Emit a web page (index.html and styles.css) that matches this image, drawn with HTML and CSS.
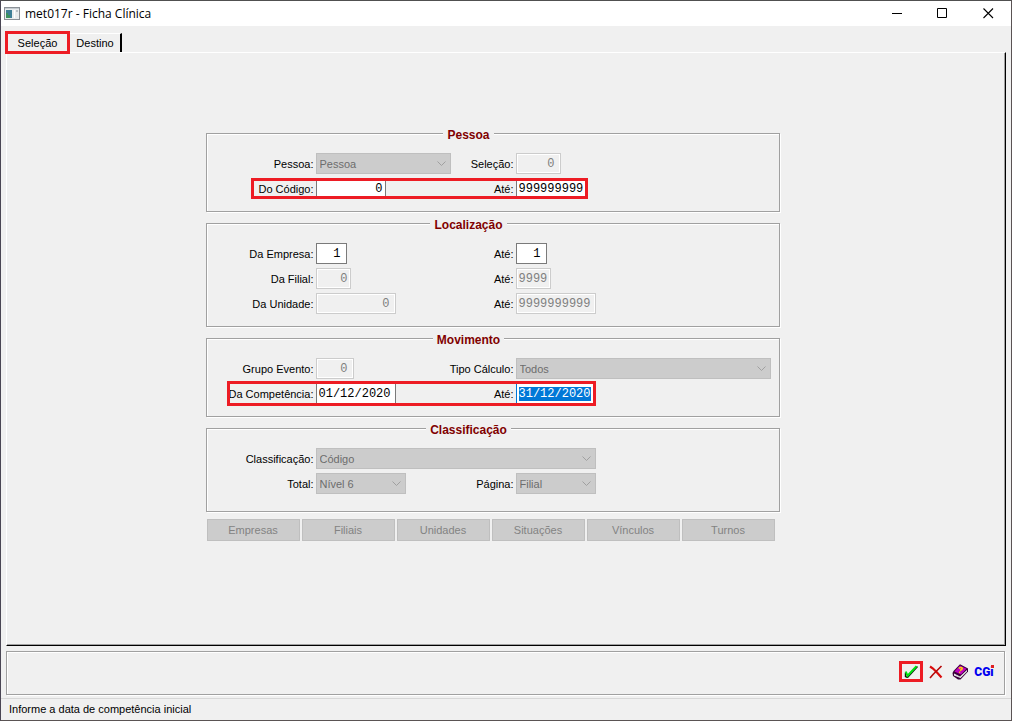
FILE: index.html
```html
<!DOCTYPE html>
<html lang="pt-BR">
<head>
<meta charset="utf-8">
<title>met017r - Ficha Clínica</title>
<link rel="stylesheet" href="styles.css">
</head>
<body>
<div class="window">
  <header class="titlebar">
    <svg class="app-icon" width="16" height="13" viewBox="0 0 16 13" shape-rendering="crispEdges">
      <rect width="16" height="13" fill="#8a9096"/><rect x="1" y="2" width="14" height="10" fill="#e9ecee"/>
      <rect x="1" y="1" width="14" height="1" fill="#c4cacf"/>
      <rect x="2" y="3" width="6" height="8" fill="#3e7f96"/><path d="M2 6h2v2h2v3H2z" fill="#3b9160"/>
      <rect x="10" y="3" width="1" height="8" fill="#fff"/><rect x="12" y="3" width="2" height="2" fill="#b9c1c7"/>
    </svg>
    <h1>met017r - Ficha Clínica</h1>
    <div class="window-controls">
      <button aria-label="Minimizar"><svg width="11" height="11" viewBox="0 0 11 11"><path d="M1 5.500h10" stroke="#000"/></svg></button>
      <button aria-label="Maximizar"><svg width="11" height="11" viewBox="0 0 11 11"><path d="M.5.500h9v9h-9z" fill="none" stroke="#000"/></svg></button>
      <button aria-label="Fechar"><svg width="11" height="11" viewBox="0 0 11 11"><path d="M.5.500l9.500 9.500M10 .5L.5 10" stroke="#000" stroke-width="1.100"/></svg></button>
    </div>
  </header>

  <main>
    <div class="tabs" role="tablist">
      <button class="tab active" role="tab" aria-selected="true">Seleção</button>
      <button class="tab" role="tab" aria-selected="false">Destino</button>
    </div>
    <div class="panel" role="tabpanel">
      <form>
        <fieldset>
          <legend>Pessoa</legend>
          <div class="row">
            <label for="pessoa">Pessoa:</label>
            <select id="pessoa" class="w-135" disabled><option>Pessoa</option></select>
            <label for="selecao">Seleção:</label>
            <input id="selecao" class="w-45 number inset" value="0" disabled>
          </div>
          <div class="row marked mark-code">
            <label for="codigo">Do Código:</label>
            <input id="codigo" class="w-70 number" value="0">
            <label for="codigo-ate">Até:</label>
            <input id="codigo-ate" class="w-70" value="999999999">
          </div>
        </fieldset>

        <fieldset>
          <legend>Localização</legend>
          <div class="row">
            <label for="empresa">Da Empresa:</label>
            <input id="empresa" class="w-31 number inset" value="1">
            <label for="empresa-ate">Até:</label>
            <input id="empresa-ate" class="w-31 number inset" value="1">
          </div>
          <div class="row">
            <label for="filial">Da Filial:</label>
            <input id="filial" class="w-35 number" value="0" disabled>
            <label for="filial-ate">Até:</label>
            <input id="filial-ate" class="w-35" value="9999" disabled>
          </div>
          <div class="row">
            <label for="unidade">Da Unidade:</label>
            <input id="unidade" class="w-80 number inset" value="0" disabled>
            <label for="unidade-ate">Até:</label>
            <input id="unidade-ate" class="w-80" value="9999999999" disabled>
          </div>
        </fieldset>

        <fieldset>
          <legend>Movimento</legend>
          <div class="row">
            <label for="grupo">Grupo Evento:</label>
            <input id="grupo" class="w-38 number inset" value="0" disabled>
            <label for="tipo">Tipo Cálculo:</label>
            <select id="tipo" class="w-255" disabled><option>Todos</option></select>
          </div>
          <div class="row marked mark-period">
            <label for="competencia">Da Competência:</label>
            <input id="competencia" class="w-80" value="01/12/2020">
            <label for="competencia-ate">Até:</label>
            <input id="competencia-ate" class="w-80" value="31/12/2020">
          </div>
        </fieldset>

        <fieldset class="last">
          <legend>Classificação</legend>
          <div class="row">
            <label for="classificacao">Classificação:</label>
            <select id="classificacao" class="w-280" disabled><option>Código</option></select>
          </div>
          <div class="row">
            <label for="total">Total:</label>
            <select id="total" class="w-90" disabled><option>Nível 6</option></select>
            <label for="pagina">Página:</label>
            <select id="pagina" class="w-80" disabled><option>Filial</option></select>
          </div>
        </fieldset>

        <div class="filters">
          <button type="button" disabled>Empresas</button>
          <button type="button" disabled>Filiais</button>
          <button type="button" disabled>Unidades</button>
          <button type="button" disabled>Situações</button>
          <button type="button" disabled>Vínculos</button>
          <button type="button" disabled>Turnos</button>
        </div>
      </form>
    </div>

    <div class="toolbar">
      <button class="confirm" aria-label="Confirmar">
        <svg width="14" height="13" viewBox="0 0 14 13"><path d="M1.500 7.500v4l2 1L13.500 1.500" fill="none" stroke="#111" stroke-width="1.400"/><path d="M1.800 6.500L3.500 10.800 12.500 1.200" fill="none" stroke="#00e010" stroke-width="2"/></svg>
      </button>
      <button aria-label="Cancelar">
        <svg width="14" height="14" viewBox="0 0 14 14"><path d="M1 1.500l3 2 4 4 4.500 5" fill="none" stroke="#d90c0c" stroke-width="2.200"/><path d="M12.500 1L8 5.500l-4 4-3 3.500" fill="none" stroke="#b50808" stroke-width="1.600"/></svg>
      </button>
      <button aria-label="Ajuda">
        <svg width="17" height="16" viewBox="0 0 17 16"><path d="M.5 9L1.500 7 8 .3l8 4.200v3L8.500 15.500H6L1 12z" fill="#3a003a"/><path d="M2.500 7.500L8 1.500l6.500 3.300L9 10.500z" fill="#c000c0"/><path d="M2 9.500L8 12.500l7-6.500v1.500L8.500 14 2 11.500z" fill="#fff"/><path d="M2.500 10.500l5.500 2.700 6.500-6" fill="none" stroke="#a8a8a8" stroke-width=".5"/><path d="M6.800 4.500q2.200-1.800 3.500-.2-.2 1.600-2.300 2M7.200 8l1 .5" fill="none" stroke="#ffd800" stroke-width="1.500"/></svg>
      </button>
      <button class="brand">CGi</button>
    </div>
  </main>
  <footer>Informe a data de competência inicial</footer>
</div>
<script src="script.js"></script>
</body>
</html>
```
FILE: styles.css
```css
*, *::before, *::after { box-sizing: border-box; }

body {
  margin: 0;
  font: 11px/16px "Liberation Sans", Arial, sans-serif;
  color: #000;
  background: #f0f0f0;
}

button, select { font: inherit; }
button { padding: 0; border: 0; background: none; color: inherit; }

.window {
  display: flex;
  flex-direction: column;
  min-height: 100vh;
  border: 1px solid #5a5354;
  border-top-color: #505050;
  border-left-color: #4a4654;
}

.titlebar {
  display: flex;
  align-items: center;
  height: 25px;
  padding-left: 3px;
  background: #fff;
}
.titlebar h1 {
  flex: 1;
  margin: 0 0 0 5px;
  font: 12px/16px "Open Sans", "Noto Sans", sans-serif;
}
.window-controls { display: flex; }
.window-controls button {
  display: grid;
  place-items: center;
  width: 46px;
  height: 25px;
}

main {
  flex: 1;
  display: flex;
  flex-direction: column;
  padding: 5px 5px 3px;
}

.tabs { display: flex; align-items: flex-end; height: 21px; }
.tab {
  width: 52px;
  height: 19px;
  border-top: 1px solid #fff;
  border-right: 2px solid #000;
}
.tab.active {
  position: relative;
  z-index: 1;
  width: 65px;
  height: 23px;
  margin: 0 0 -2px -1px;
  border: 3px solid #ed1c24;
  background: #f0f0f0;
}

.panel {
  flex: 1;
  padding: 70px 27px 20px 0;
  border-top: 1px solid #fff;
  border-left: 1px solid #fff;
  border-right: 1px solid #000;
  border-bottom: 1px solid #000;
  box-shadow: inset -1px -1px 0 #a0a0a0;
}

form { width: 574px; margin: 0 auto; }

fieldset {
  display: block;
  min-width: 0;
  margin: 0 0 1px;
  padding: 10px 48px 12px 0;
  border: 1px solid #a0a0a0;
  box-shadow: 1px 1px 0 #fff, inset 1px 1px 0 #fff;
}
fieldset.last { margin-bottom: 7px; padding-bottom: 17px; }
legend {
  margin: 0 auto;
  padding: 4px 4px 0;
  font-size: 12px;
  font-weight: 700;
  color: #800000;
  background: #f0f0f0;
}

.row {
  display: grid;
  grid-template-columns: 107px 134px 62px 1fr;
  column-gap: 2px;
  align-items: center;
}
.row + .row { margin-top: 4px; }
.row label { justify-self: end; white-space: nowrap; }

.marked { position: relative; }
.marked::after {
  content: "";
  position: absolute;
  border: 3px solid #ed1c24;
  pointer-events: none;
}
.mark-code::after { top: 0; bottom: 0; left: 44px; width: 337px; }
.mark-period::after { top: -2px; bottom: -2px; left: 20px; width: 369px; }

input {
  height: 21px;
  padding: 0 2px;
  border: 1px solid #7a7a7a;
  border-radius: 0;
  outline: 0;
  background: #fff;
  color: #000;
  font: 12px/14px "Liberation Mono", monospace;
}
input:focus { border-color: #0078d7; caret-color: transparent; }
input::selection { background: #0078d7; color: #fff; }
input:disabled {
  border-color: #ccc;
  background: #f0f0f0;
  box-shadow: inset 0 0 0 1px #fff;
  color: #808080;
}
.number { padding-right: 2px; text-align: right; }
.number.inset { padding-right: 5px; }

select {
  height: 21px;
  padding: 0 20px 0 3px;
  border: 1px solid #bfbfbf;
  border-radius: 0;
  appearance: none;
  background: #ccc url("data:image/svg+xml,%3Csvg xmlns='http://www.w3.org/2000/svg' width='9' height='6'%3E%3Cpath d='M.5.5l4 4 4-4' fill='none' stroke='%23a0a0a0'/%3E%3C/svg%3E") no-repeat right 4px center;
  color: #6d6d6d;
}
select:disabled { opacity: 1; }

.w-31 { width: 31px; }
.w-35 { width: 35px; }
.w-38 { width: 38px; }
.w-45 { width: 45px; }
.w-70 { width: 70px; }
.w-80 { width: 80px; }
.w-90 { width: 90px; }
.w-135 { width: 135px; }
.w-255 { width: 255px; }
.w-280 { width: 280px; }

.filters {
  display: grid;
  grid-template-columns: repeat(6, 1fr);
  gap: 2px;
  padding: 0 5px 0 1px;
}
.filters button {
  height: 22px;
  border: 1px solid #bfbfbf;
  background: #ccc;
  color: #838383;
}

.toolbar {
  display: flex;
  align-items: center;
  justify-content: flex-end;
  height: 44px;
  margin: 5px 1px 0 0;
  padding: 0 8px 3px 0;
  border: 1px solid #a0a0a0;
  box-shadow: 1px 1px 0 #fff, inset 1px 1px 0 #fff;
}
.toolbar button {
  display: grid;
  place-items: center;
  width: 24px;
  height: 21px;
}
.toolbar .confirm { margin-right: 1px; border: 3px solid #ed1c24; }
.toolbar .brand {
  position: relative;
  font: 900 12px/16px Roboto, "Liberation Sans", sans-serif;
  color: #0000f0;
}
.toolbar .brand::after {
  content: "";
  position: absolute;
  top: 4px;
  right: 2px;
  width: 3px;
  height: 3px;
  background: #e02020;
}

footer {
  height: 22px;
  padding: 2px 8px;
  border-top: 1px solid #d7d7d7;
}
```
FILE: script.js
```js
const field = document.getElementById("competencia-ate");
field.focus();
field.select();
```
